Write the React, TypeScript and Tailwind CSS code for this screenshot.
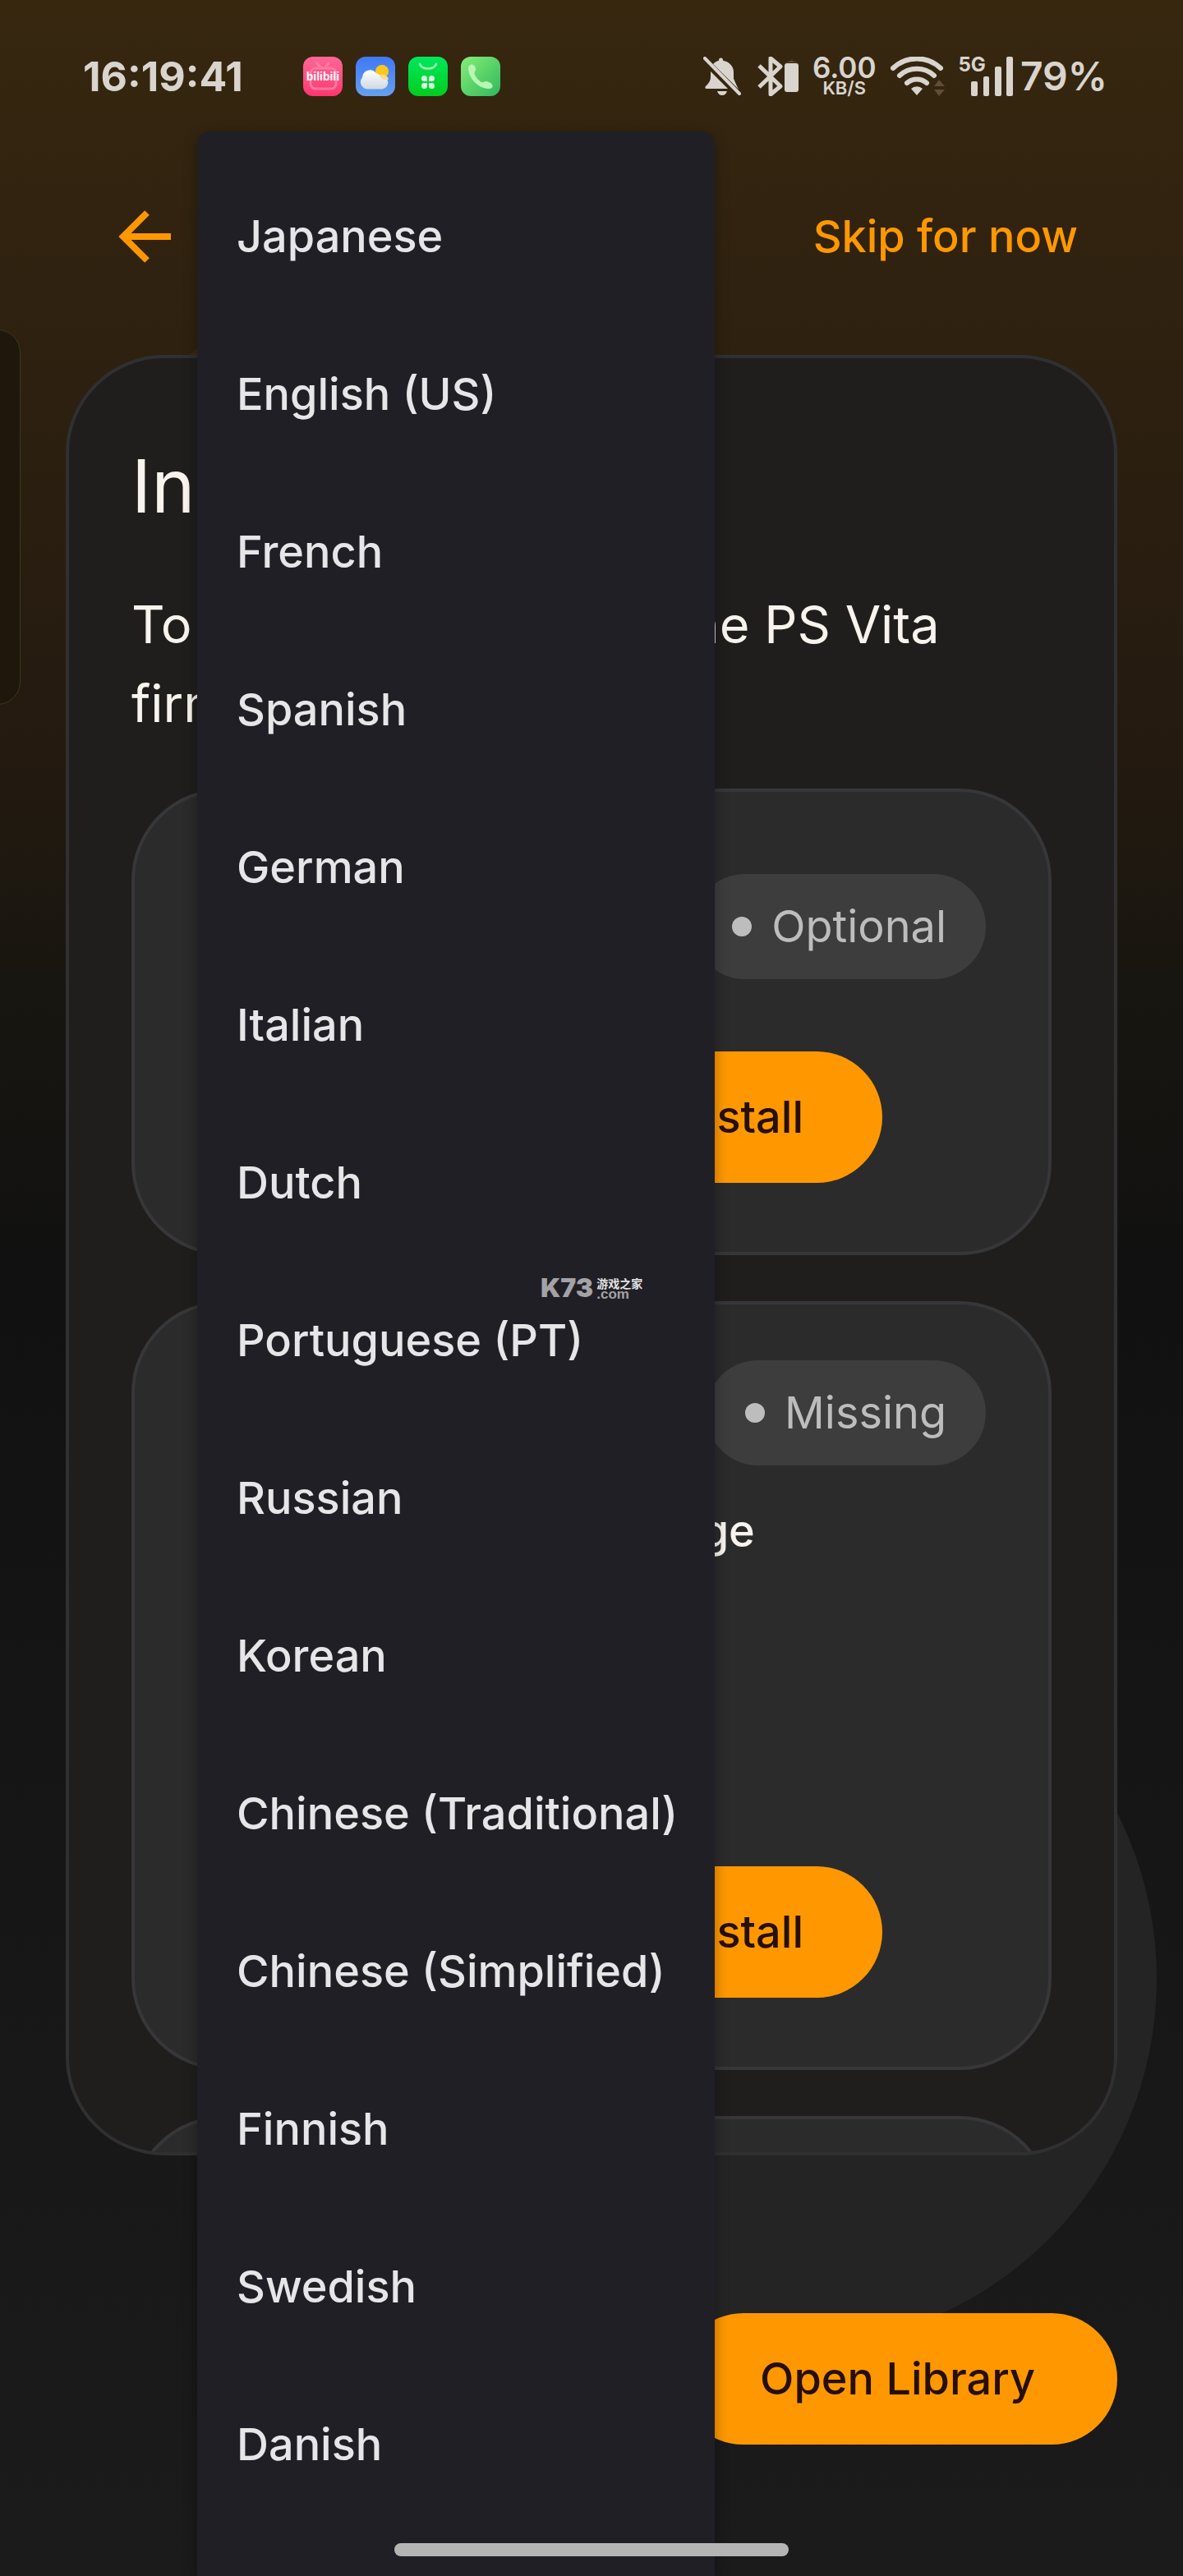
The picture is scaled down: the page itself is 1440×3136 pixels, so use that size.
import type { ReactNode } from "react";

const languages = [
  "Japanese",
  "English (US)",
  "French",
  "Spanish",
  "German",
  "Italian",
  "Dutch",
  "Portuguese (PT)",
  "Russian",
  "Korean",
  "Chinese (Traditional)",
  "Chinese (Simplified)",
  "Finnish",
  "Swedish",
  "Danish",
];

const AppIcons = () => (
  <div className="flex gap-4">
    {/* Video */}
    <div className="relative flex h-12 w-12 items-center justify-center rounded-xl bg-gradient-to-b from-[#ff6596] to-[#ff3570]">
      <svg className="absolute inset-0" viewBox="0 0 48 48" fill="none" stroke="#ff7ba3" strokeWidth="3">
        <rect x="9" y="14" width="31" height="25" rx="6" />
        <path d="M17 8l4 5M31 8l-4 5" strokeLinecap="round" />
      </svg>
      <span className="relative font-['Liberation_Sans',sans-serif] text-[14px] leading-none font-bold text-white">
        bilibili
      </span>
    </div>
    {/* Weather */}
    <svg className="h-12 w-12" viewBox="0 0 48 48">
      <defs>
        <linearGradient id="sky" x1="0" y1="0" x2="0" y2="1">
          <stop offset="0" stopColor="#3f78f6" />
          <stop offset="1" stopColor="#66a0ee" />
        </linearGradient>
        <linearGradient id="cloud" x1="0" y1="0" x2="0" y2="1">
          <stop offset="0" stopColor="#ffffff" />
          <stop offset="1" stopColor="#cfd8e4" />
        </linearGradient>
      </defs>
      <rect width="48" height="48" rx="12" fill="url(#sky)" />
      <circle cx="32" cy="18" r="8" fill="#ffc61c" />
      <path
        d="M14 39.500a8.500 8.500 0 0 1-6-14A9.500 9.500 0 0 1 25 20a9 9 0 0 1 5 3.500 8 8 0 1 1 2.500 16z"
        fill="url(#cloud)"
      />
      <path d="M29 22.500a8 8 0 0 1 11 5 8 8 0 0 1-11-5z" fill="#f6dc8c" />
    </svg>
    {/* Store */}
    <svg className="h-12 w-12" viewBox="0 0 48 48">
      <defs>
        <linearGradient id="store" x1="0" y1="0" x2="0" y2="1">
          <stop offset="0" stopColor="#00e85c" />
          <stop offset="1" stopColor="#00cd1e" />
        </linearGradient>
      </defs>
      <rect width="48" height="48" rx="12" fill="url(#store)" />
      <path d="M14 9a10.500 8 0 0 0 20 0" fill="none" stroke="#a5f7bd" strokeWidth="2.500" strokeLinecap="round" />
      <g fill="#d6fbe0">
        <path d="M19.500 23a3.500 3.500 0 0 1 3.500 3.500V30h-3.500a3.500 3.500 0 0 1 0-7z" />
        <path d="M28.500 23a3.500 3.500 0 0 0-3.500 3.500V30h3.500a3.500 3.500 0 0 0 0-7z" />
        <path d="M19.500 39a3.500 3.500 0 0 0 3.500-3.500V32h-3.500a3.500 3.500 0 0 0 0 7z" />
        <path d="M28.500 39a3.500 3.500 0 0 1-3.500-3.500V32h3.500a3.500 3.500 0 0 1 0 7z" />
      </g>
    </svg>
    {/* Phone */}
    <svg className="h-12 w-12" viewBox="0 0 48 48">
      <defs>
        <linearGradient id="phone" x1="0" y1="0" x2="1" y2="1">
          <stop offset="0" stopColor="#86ee77" />
          <stop offset="1" stopColor="#2fb85c" />
        </linearGradient>
      </defs>
      <rect width="48" height="48" rx="12" fill="url(#phone)" />
      <path
        d="M9 14c0-3 2-4.500 4-4.500 3 0 5 2.500 5 6 0 2-2 3-1.500 5 1 4 5 8.500 8.500 10.500 2 1 3.500-1.500 6-1 3.500.5 7 2.500 7.500 5 .5 3-2.500 4.500-6 4C20 37.500 9.500 26 9 14z"
        fill="#b9f5b4"
      />
    </svg>
  </div>
);

const StatusBar = () => (
  <header className="flex h-48 items-start justify-between pt-[61px] pr-[92px] pl-[101px] text-[#d9d4cd]">
    <div className="flex h-16 items-center gap-[73px]">
      <span className="text-[50px] leading-none font-bold">16:19:41</span>
      <AppIcons />
    </div>
    <div className="flex h-16 items-center">
      {/* Muted bell */}
      <svg className="mr-5 h-12 w-[46px]" viewBox="0 0 46 48" fill="currentColor">
        <path d="M12 9c1.500-2 4-3.500 7-4.300V4a2.500 2.500 0 0 1 5 0v.7c8 1.500 13 7 13 14v8l4 9 2 4z" />
        <path d="M9 18l21 21H4c-2 0-2-2-1-3 4-4 6-7 6-12zM17 42h12c-1 3-3 5-6 5s-5-2-6-5z" />
        <path d="M2 2l42 43" stroke="currentColor" strokeWidth="4" strokeLinecap="round" />
      </svg>
      {/* Bluetooth and its battery */}
      <svg className="mr-[17px] h-12 w-[50px]" viewBox="0 0 50 48">
        <path
          d="M2 11l26 25-12 10V2l12 10L2 37"
          fill="none"
          stroke="currentColor"
          strokeWidth="5"
          strokeLinejoin="round"
        />
        <rect x="33" y="8" width="17" height="35" rx="3" fill="currentColor" />
        <path d="M35 7c1-1 2-1 4-1 0-2 5-2 5 0 2 0 3 0 4 1z" fill="#5f4e38" />
      </svg>
      <div className="mr-4 flex flex-col items-center font-semibold">
        <span className="text-[35px] leading-[29px]">6.00</span>
        <span className="text-[22px] leading-[21px]">KB/S</span>
      </div>
      {/* Wifi */}
      <svg className="mr-4 h-12 w-[68px]" viewBox="0 0 68 48">
        <g fill="none" stroke="currentColor" strokeWidth="6" strokeLinecap="round">
          <path d="M4 14a42 42 0 0 1 58 0" />
          <path d="M12 23a31 31 0 0 1 42 0" />
          <path d="M21 32a18 18 0 0 1 24 0" />
        </g>
        <path d="M26 39a10 10 0 0 1 14 0l-7 8z" fill="currentColor" />
        <path d="M54 36l6-8 7 8zM54 40l6 8 7-8z" fill="#5f4e38" />
      </svg>
      <div className="mr-2 flex items-start">
        <span className="text-2xl leading-5 font-bold">5G</span>
        <svg className="-ml-[18px] h-12 w-[52px]" viewBox="0 0 52 48" fill="currentColor">
          <rect x="0" y="30" width="8" height="18" rx="2" />
          <rect x="15" y="24" width="7" height="24" rx="2" />
          <rect x="29" y="12" width="8" height="36" rx="2" />
          <rect x="43" y="0" width="8" height="48" rx="2" />
        </svg>
      </div>
      <span className="text-5xl leading-none font-semibold">79%</span>
    </div>
  </header>
);

const StatusPill = ({ label }: { label: string }) => (
  <div className="flex h-32 items-center gap-6 self-end rounded-full bg-[#3d3d3d] px-12 text-[#bdbdbd]">
    <span className="h-6 w-6 rounded-full bg-[#bdbdbd]" />
    <span>{label}</span>
  </div>
);

const InstallButton = () => (
  <button
    type="button"
    className="h-40 w-[708px] max-w-full self-center rounded-full bg-[#ff9800] px-24 text-right font-medium text-[#250f00]"
  >
    Install
  </button>
);

const PackageCard = ({ className, children }: { className: string; children?: ReactNode }) => (
  <section
    className={`flex shrink-0 flex-col rounded-[112px] border-4 border-[#37373a] bg-[#2b2b2b] px-[76px] text-[54px] leading-[80px] ${className}`}
  >
    {children}
  </section>
);

const LanguageMenu = () => (
  <ul
    role="listbox"
    aria-label="Language"
    className="absolute top-40 bottom-0 left-60 w-[630px] overflow-hidden rounded-t-2xl bg-[#201f25] py-8 shadow-[0_4px_16px_rgba(0,0,0,0.35)]"
  >
    {languages.map((language) => (
      <li key={language} role="option" aria-selected={false}>
        <button
          type="button"
          className="h-48 w-full px-12 text-left text-[54px] leading-[80px] font-medium whitespace-nowrap text-[#e6e6e8]"
        >
          {language}
        </button>
      </li>
    ))}
  </ul>
);

const Watermark = () => (
  <div className="absolute top-[1553px] left-[658px] flex items-center gap-1 text-[#a3a3a5]">
    <span className="text-[32px] leading-[30px] font-black">K73</span>
    <span className="flex flex-col">
      <span className="font-['Noto_Sans_CJK_SC',sans-serif] text-[14px] leading-[15px] font-bold text-[#e2e2e2]">
        游戏之家
      </span>
      <span className="font-['Liberation_Sans',sans-serif] text-[17px] leading-3 font-bold">.com</span>
    </span>
  </div>
);

const App = () => {
  return (
    <div className="relative flex h-screen flex-col overflow-hidden bg-[linear-gradient(to_bottom,#37270f_0%,#2e2110_13%,#241a10_29%,#181610_38%,#111111_49%,#171717_77%,#1b1b1b_100%)] font-[Inter,sans-serif]">
      {/* Background shapes */}
      <div className="absolute top-[316px] left-[86px] h-[888px] w-[888px] rounded-full bg-[#3b290e]" />
      <div className="absolute top-[1961px] left-[512px] h-[896px] w-[896px] rounded-full bg-[#242424]" />
      <div className="absolute top-[401px] -left-16 h-[457px] w-[89px] rounded-[28px] border border-[#3a3a16] bg-[#1f170c]" />

      <StatusBar />

      {/* Toolbar */}
      <nav className="relative flex h-48 items-center justify-between pr-[128px] pl-36">
        <button type="button" aria-label="Back">
          <svg className="h-16 w-16" viewBox="0 0 64 64" fill="none" stroke="#ff9800" strokeWidth="8">
            <path d="M64 32H8M35 3L6 32l29 29" />
          </svg>
        </button>
        <button type="button" className="text-[54px] leading-none font-medium text-[#ff9800]">
          Skip for now
        </button>
      </nav>

      <main className="relative mx-20 mt-12 flex min-h-0 flex-1 flex-col overflow-hidden rounded-[120px] border-4 border-[#303033] bg-[#1f1e1c] px-[76px] pt-[92px] text-[#f8f3ed]">
        <h1 className="text-[90px] leading-[128px]">Install Files</h1>
        <p className="mt-14 text-[63px] leading-[96px]">
          To play games, install the PS Vita firmware.
        </p>
        <div className="mt-14 flex flex-col gap-14">
          <PackageCard className="pt-[100px] pb-[84px]">
            <StatusPill label="Optional" />
            <div className="h-[88px]" />
            <InstallButton />
          </PackageCard>
          <PackageCard className="pt-[68px] pb-[84px]">
            <StatusPill label="Missing" />
            <h2 className="mt-10 self-center font-medium">Select package</h2>
            <div className="h-[368px]" />
            <InstallButton />
          </PackageCard>
          <PackageCard className="h-[560px]" />
        </div>
      </main>

      <footer className="relative flex justify-end px-20 pt-48 pb-40">
        <button
          type="button"
          className="h-40 rounded-full bg-[#ff9800] px-[100px] text-[54px] leading-[80px] font-medium text-[#250f00]"
        >
          Open Library
        </button>
      </footer>

      <LanguageMenu />
      <Watermark />
      <div className="absolute bottom-6 left-1/2 h-4 w-1/3 -translate-x-1/2 rounded-full bg-[#b4b4b5]" />
    </div>
  );
};

export default App;
